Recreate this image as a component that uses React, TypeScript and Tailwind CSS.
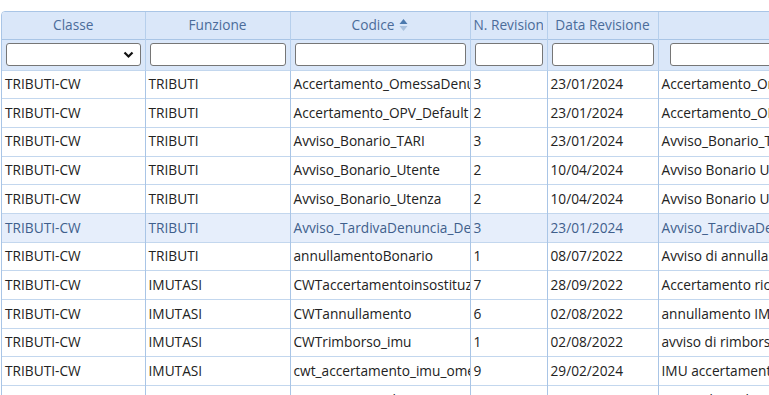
import React from "react";

const rows: string[][] = [
  ["TRIBUTI-CW", "TRIBUTI", "Accertamento_OmessaDenunciaTARI", "3", "23/01/2024", "Accertamento_OmessaDenuncia"],
  ["TRIBUTI-CW", "TRIBUTI", "Accertamento_OPV_Default", "2", "23/01/2024", "Accertamento_OPV_Default"],
  ["TRIBUTI-CW", "TRIBUTI", "Avviso_Bonario_TARI", "3", "23/01/2024", "Avviso_Bonario_TARI"],
  ["TRIBUTI-CW", "TRIBUTI", "Avviso_Bonario_Utente", "2", "10/04/2024", "Avviso Bonario Utente"],
  ["TRIBUTI-CW", "TRIBUTI", "Avviso_Bonario_Utenza", "2", "10/04/2024", "Avviso Bonario Utenza"],
  ["TRIBUTI-CW", "TRIBUTI", "Avviso_TardivaDenuncia_Default", "3", "23/01/2024", "Avviso_TardivaDenuncia"],
  ["TRIBUTI-CW", "TRIBUTI", "annullamentoBonario", "1", "08/07/2022", "Avviso di annullamento"],
  ["TRIBUTI-CW", "IMUTASI", "CWTaccertamentoinsostituzione", "7", "28/09/2022", "Accertamento ricorso"],
  ["TRIBUTI-CW", "IMUTASI", "CWTannullamento", "6", "02/08/2022", "annullamento IMU"],
  ["TRIBUTI-CW", "IMUTASI", "CWTrimborso_imu", "1", "02/08/2022", "avviso di rimborso"],
  ["TRIBUTI-CW", "IMUTASI", "cwt_accertamento_imu_omesso", "9", "29/02/2024", "IMU accertamento"],
  ["TRIBUTI-CW", "IMUTASI", "cwt_avviso_totale", "1", "29/02/2024", "avviso di totale"],
];

const widths = [143, 145, 180, 77, 111, 200];

export default function App() {
  return (
    <div
      className="w-[769px] h-[395px] overflow-hidden bg-white pt-[11px] pl-[1px]"
      style={{ fontFamily: '"Open Sans", sans-serif' }}
    >
      <div className="w-[856px] rounded-t-[4px] border border-[#a9c5e6] overflow-hidden">
        <table className="table-fixed border-collapse text-[13.7px] w-[856px]">
          <colgroup>
            {widths.map((w, i) => (
              <col key={i} style={{ width: w }} />
            ))}
          </colgroup>
          <thead>
            <tr className="h-[27px] bg-[#dae7f9] text-[#4b6c9a]">
              <th className="font-normal border-r border-[#b6cfec] text-center whitespace-nowrap overflow-hidden">Classe</th>
              <th className="font-normal border-r border-[#b6cfec] text-center whitespace-nowrap overflow-hidden">Funzione</th>
              <th className="font-normal border-r border-[#b6cfec] text-center whitespace-nowrap overflow-hidden">
                <span className="inline-flex items-center gap-[5px]">
                  Codice
                  <svg width="9" height="14" viewBox="0 0 9 14">
                    <path d="M4.5 1 L8.5 6 L0.5 6 Z" fill="#4b79ae" />
                    <path d="M4.5 13 L8.5 8 L0.5 8 Z" fill="#a9c1de" />
                  </svg>
                </span>
              </th>
              <th className="font-normal border-r border-[#b6cfec] text-left pl-[3px] pr-[4px] whitespace-nowrap overflow-hidden">
                <div className="overflow-hidden">N. Revisione</div>
              </th>
              <th className="font-normal border-r border-[#b6cfec] text-center whitespace-nowrap overflow-hidden">Data Revisione</th>
              <th className="font-normal"></th>
            </tr>
            <tr className="h-[31px] bg-[#dae7f9] border-t border-[#a9c5e6]">
              <th className="border-r border-[#b6cfec] px-[4px] py-0">
                <div className="h-[23px] bg-white border border-[#767676] rounded-[3px] flex items-center justify-end pr-[6px]">
                  <svg width="11" height="8" viewBox="0 0 11 8">
                    <path d="M1.5 1.5 L5.5 5.5 L9.5 1.5" stroke="#111" strokeWidth="2.2" fill="none" />
                  </svg>
                </div>
              </th>
              {[1, 2, 3, 4].map((i) => (
                <th key={i} className="border-r border-[#b6cfec] px-[4px] py-0">
                  <div className="h-[23px] bg-white border border-[#767676] rounded-[3px]" />
                </th>
              ))}
              <th className="pl-[11px] py-0">
                <div className="h-[23px] bg-white border border-[#767676] rounded-[3px]" />
              </th>
            </tr>
          </thead>
          <tbody>
            {rows.map((r, ri) => {
              const hl = ri === 5;
              return (
                <tr
                  key={ri}
                  className={`h-[28.7px] border-t border-[#c3d7ee] ${hl ? "bg-[#e6eefb] text-[#3f5f8c]" : "bg-white text-[#222]"}`}
                >
                  {r.map((c, ci) => (
                    <td
                      key={ci}
                      className={`pl-[3px] pr-0 whitespace-nowrap overflow-hidden ${ci < 5 ? "border-r border-[#a9c5e6]" : ""}`}
                    >
                      {c}
                    </td>
                  ))}
                </tr>
              );
            })}
          </tbody>
        </table>
      </div>
    </div>
  );
}
